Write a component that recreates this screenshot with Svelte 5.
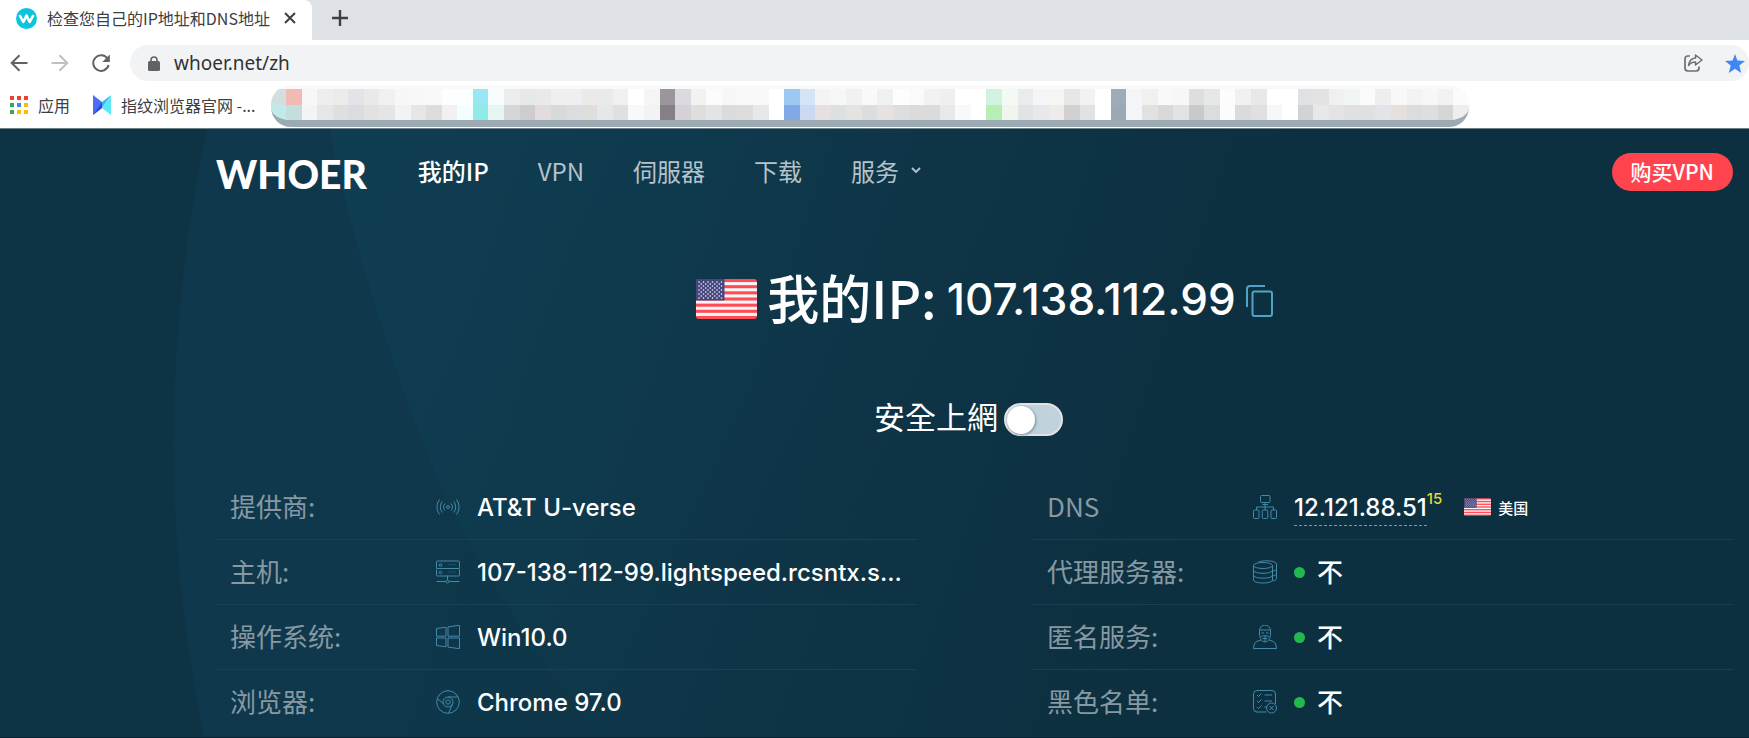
<script>
    const blurred = [
        ["#cfe0df", "#bfeae8"], ["#f3b9b4", "#c2dfdd"], ["#f7f7f7", "#f4f4f4"], ["#eeeeee", "#e6e6e6"],
        ["#ecebea", "#dfdfdf"], ["#e2e4e7", "#dcdce0"], ["#e9e9e9", "#e3e2de"], ["#f0f0f0", "#e3e5e9"],
        ["#f7f7f7", "#f3f3f3"], ["#f7f8f7", "#e6e6e6"], ["#f9f9f8", "#dfdddb"], ["#fdfefe", "#f1f1f4"],
        ["#fbffff", "#f3feff"], ["#97e8f3", "#90ebe8"], ["#f7fdfd", "#e6f6f5"], ["#ededed", "#d6d6d6"],
        ["#e6e8e9", "#cdcdd0"], ["#e9e9e9", "#e2dcdc"], ["#efefef", "#d8dad9"], ["#efefef", "#dbdde0"],
        ["#ece9e9", "#e0deda"], ["#e9ebea", "#e5e7e9"], ["#f0f0f0", "#dfe1e0"], ["#ffffff", "#f9f9f9"],
        ["#f5f5f5", "#f3f3f3"], ["#9b969c", "#867f87"], ["#dddadf", "#d5d2d7"], ["#f2f2f2", "#dfdedb"],
        ["#fcfcfc", "#e4e4e7"], ["#f7f7f7", "#dbdbdc"], ["#f9f9f9", "#dfdcdc"], ["#f9f9f9", "#e6e8e9"],
        ["#ffffff", "#ffffff"], ["#9ec8f2", "#80a9e5"], ["#d5e3f7", "#cad8f2"], ["#f4f4f4", "#e5e1e1"],
        ["#f5f8f7", "#dde0e2"], ["#f1f1f1", "#e4e3e0"], ["#f9f9f9", "#dbdde1"], ["#f0f0f0", "#e5e2e0"],
        ["#fbfefd", "#dedede"], ["#f9faf9", "#dddbd9"], ["#f2f2f2", "#dbdbdd"], ["#efefef", "#e9e9e9"],
        ["#ffffff", "#f9f9f9"], ["#ffffff", "#ffffff"], ["#d2f2e0", "#b6efb3"], ["#f3f9f5", "#f0f6ee"],
        ["#eaecec", "#e1e3e5"], ["#f4f5f9", "#e8e8ea"], ["#f5f5f3", "#f0eae9"], ["#e6e6e6", "#d1d1d1"],
        ["#f2f2f2", "#e0e2e5"], ["#ffffff", "#ffffff"], ["#9dacb8", "#9ba8b5"], ["#f3f5f9", "#f3f5f8"],
        ["#f0f0f0", "#e1e1df"], ["#f9f9f9", "#dbd8da"], ["#f7f7f7", "#e0e4e5"], ["#dedede", "#c9c9cb"],
        ["#e5e8e6", "#dadddb"], ["#fcfcfc", "#fcfcfc"], ["#f1f1f1", "#d9dcda"], ["#e8e8ea", "#e2dfe1"],
        ["#ffffff", "#f7f7f7"], ["#ffffff", "#ffffff"], ["#dfe1e4", "#d1d3d4"], ["#e3e3e3", "#e8e8e8"],
        ["#f0f0f0", "#e5e3e4"], ["#f1f5f3", "#e0e0e0"], ["#fbfbfb", "#e0e0e0"], ["#eeeeee", "#e2e4e7"],
        ["#f8f8f8", "#e3e0dd"], ["#f3f3f3", "#dcdcde"], ["#f7f7f7", "#dedee0"], ["#f2f2f2", "#d6d6d6"],
        ["#fbfbfb", "#eeeeee"],
    ];

    const appDots = ["#ea4335", "#ea4335", "#ea4335", "#34a853", "#4285f4", "#fbbc04", "#34a853", "#fbbc04", "#fbbc04"];

    const menu = [
        { text: "我的IP", active: true },
        { text: "VPN" },
        { text: "伺服器" },
        { text: "下载" },
        { text: "服务", more: true },
    ];

    const left = [
        { label: "提供商:", icon: "signal", value: "AT&T U-verse" },
        { label: "主机:", icon: "server", value: "107-138-112-99.lightspeed.rcsntx.s..." },
        { label: "操作系统:", icon: "windows", value: "Win10.0" },
        { label: "浏览器:", icon: "chrome", value: "Chrome 97.0" },
    ];

    const right = [
        { label: "DNS", icon: "network", value: "12.121.88.51", count: 15, country: "美国" },
        { label: "代理服务器:", icon: "database", value: "不", dot: true },
        { label: "匿名服务:", icon: "person", value: "不", dot: true },
        { label: "黑色名单:", icon: "list", value: "不", dot: true },
    ];

    let address = $state("whoer.net/zh");
    let safe = $state(false);
</script>

{#snippet flag()}
    <svg class="flag" viewBox="0 0 61 40" aria-hidden="true">
        <rect width="61" height="40" rx="3" fill="#ff4b55" />
        {#each [1, 3, 5, 7, 9, 11] as n}
            <rect y={n * 3.077} width="61" height="3.077" fill="#f5f5f5" />
        {/each}
        <path d="M3 0H28.500V21.500H0V3Q0 0 3 0Z" fill="#46467f" />
        {#each [3, 7, 11, 15, 19] as y}
            {#each [3, 7.500, 12, 16.500, 21, 25.500] as x}
                <circle cx={x} cy={y} r="0.800" fill="#f5f5f5" />
            {/each}
        {/each}
        {#each [5, 9, 13, 17] as y}
            {#each [5.250, 9.750, 14.250, 18.750, 23.250] as x}
                <circle cx={x} cy={y} r="0.800" fill="#f5f5f5" />
            {/each}
        {/each}
    </svg>
{/snippet}

{#snippet icon(name)}
    <svg class="icon" viewBox="0 0 24 24" aria-hidden="true">
        {#if name === "signal"}
            <circle cx="12" cy="12" r="1.500" />
            <path d="M9 8.500a5 5 0 0 0 0 7M15 8.500a5 5 0 0 1 0 7M6.300 6.500a8.500 8.500 0 0 0 0 11M17.700 6.500a8.500 8.500 0 0 1 0 11M3.500 4.500a12 12 0 0 0 0 15M20.500 4.500a12 12 0 0 1 0 15" />
        {:else if name === "server"}
            <rect x="0.500" y="1" width="23" height="7.500" rx="1" />
            <rect x="0.500" y="8.500" width="23" height="7.500" rx="1" />
            <circle cx="4.500" cy="5" r="1.300" />
            <circle cx="4.500" cy="12.500" r="1.300" />
            <path d="M13 4.500h7M13 12h7" stroke-dasharray="1.500 1" opacity="0.500" />
            <path d="M11.500 16v4M0.500 21.500h9.500M13 21.500h10.500" />
            <circle cx="11.500" cy="21.500" r="1.500" />
        {:else if name === "windows"}
            <path d="M.5 3.500 10 2.200V11.200H.5ZM12 1.900 23.500.3V11.200H12ZM.5 13H10V21.800L.5 20.500ZM12 13H23.500V23.700L12 22.100Z" />
        {:else if name === "chrome"}
            <circle cx="12" cy="12" r="11.300" />
            <circle cx="12" cy="12" r="5" />
            <circle cx="12" cy="12" r="2.200" />
            <path d="M12 7H22.200M16.700 13.500 12.500 23.300M1.500 8.500l6 5.500" />
        {:else if name === "network"}
            <rect x="7.500" y="0.500" width="9.500" height="7" rx="1" />
            <path d="M9.500 9.500h5.500M12 7.500V15M3.500 15V12h17v3" />
            <rect x="0.500" y="15" width="5.500" height="8.500" rx="1" />
            <rect x="9.300" y="15" width="5.500" height="8.500" rx="1" />
            <rect x="18" y="15" width="5.500" height="8.500" rx="1" />
        {:else if name === "database"}
            <ellipse cx="10" cy="5.500" rx="9.500" ry="3" />
            <path d="M.5 5.500v14.500c0 4 19 4 19 0V5.500M.5 10.300c0 4 19 4 19 0M.5 15.200c0 4 19 4 19 0" />
            <path d="M5 2.500c2-2.500 18.500-2.500 18.500 1.500v14.500c0 1.200-1.500 2-4 2.500M23.500 8.700c0 1.200-1.500 2-4 2.500M23.500 13.500c0 1.200-1.500 2-4 2.500" />
        {:else if name === "person"}
            <path d="M6.500 9V5.500a5.500 5.500 0 0 1 11 0V9c0 5-3 8-5.500 8s-5.500-3-5.500-8Z" />
            <path d="M6.500 5h11M8.500 8h2.500M13 8h2.500M8 11.500c2-1 6-1 8 0M9.500 13.500h5M12 11v6" />
            <path d="M8 15 3.500 16.500Q.5 18 .5 23.500H23.500Q23.500 18 20.500 16.500L16 15" />
        {:else}
            <path d="M13.500 22H4a3.500 3.500 0 0 1-3.500-3.500V4A3.500 3.500 0 0 1 4 .500h15A3.500 3.500 0 0 1 22.500 4v10" />
            <path d="m4 5 1.500 1.500 3-3M4 11l1.500 1.500 3-3M4 17l1.500 1.500 3-3M11.500 5h7.500M11.500 11h7.500M11.500 17h2" />
            <circle cx="18.500" cy="18" r="5" />
            <path d="m16.500 16 4 4m0-4-4 4" />
        {/if}
    </svg>
{/snippet}

{#snippet column(rows)}
    <dl>
        {#each rows as row}
            <div class="row">
                <dt>{row.label}</dt>
                <dd>
                    {@render icon(row.icon)}
                    {#if row.dot}<span class="dot"></span>{/if}
                    {#if row.count}
                        <a class="dns" href="#dns">{row.value}</a><sup>{row.count}</sup>
                        <span class="country">{@render flag()} {row.country}</span>
                    {:else}
                        <span class:status={row.dot}>{row.value}</span>
                    {/if}
                </dd>
            </div>
        {/each}
    </dl>
{/snippet}

<div class="browser">
    <div class="tabs">
        <div class="tab">
            <svg width="21" height="21" viewBox="0 0 21 21" aria-hidden="true">
                <circle cx="10.500" cy="10.500" r="10.500" fill="#0cc5dc" />
                <path d="M3.500 7 7.300 14 10.500 7.500 13.700 14 17.500 7" fill="none" stroke="#fff" stroke-width="2.600" stroke-linejoin="round" />
            </svg>
            <span>检查您自己的IP地址和DNS地址</span>
            <button aria-label="关闭">
                <svg width="12" height="12" viewBox="0 0 12 12"><path d="m1 1 10 10M11 1 1 11" stroke="#3c4043" stroke-width="2" /></svg>
            </button>
        </div>
        <button class="new-tab" aria-label="新标签页">
            <svg width="16" height="16" viewBox="0 0 16 16"><path d="M8 0v16M0 8h16" stroke="#3c4043" stroke-width="2.400" /></svg>
        </button>
    </div>

    <div class="toolbar">
        <button aria-label="后退">
            <svg width="18" height="18" viewBox="0 0 18 18"><path d="M17.500 9H2M9.500 1.200 1.700 9l7.800 7.800" fill="none" stroke="#5f6368" stroke-width="2" /></svg>
        </button>
        <button aria-label="前进">
            <svg width="18" height="18" viewBox="0 0 18 18"><path d="M.5 9H16M8.500 1.200 16.300 9l-7.800 7.800" fill="none" stroke="#bdc0c4" stroke-width="2" /></svg>
        </button>
        <button aria-label="重新加载">
            <svg width="18" height="18" viewBox="0 0 18 18"><path d="M15.500 4.700A7.800 7.800 0 1 0 16.600 11" fill="none" stroke="#5f6368" stroke-width="2" /><path d="M17.800.5V8H10.300Z" fill="#5f6368" /></svg>
        </button>
        <div class="address">
            <svg width="12" height="15" viewBox="0 0 12 15" aria-hidden="true"><rect y="5" width="12" height="10" rx="1.500" fill="#5f6368" /><path d="M3 6V4a3 3 0 0 1 6 0v2" fill="none" stroke="#5f6368" stroke-width="1.600" /></svg>
            <input aria-label="地址" bind:value={address} />
            <button aria-label="分享">
                <svg width="19" height="18" viewBox="0 0 19 18"><path d="M6 2H4Q1 2 1 5v9q0 3 3 3h8q3 0 3-3v-1.500" fill="none" stroke="#6b6f73" stroke-width="1.700" /><path d="M11.500 1 18 6l-6.500 5V8Q7 8 4.500 11.500 5.500 4.500 11.500 4Z" fill="none" stroke="#6b6f73" stroke-width="1.500" stroke-linejoin="round" /></svg>
            </button>
            <button aria-label="收藏">
                <svg width="20" height="19" viewBox="0 0 20 19"><path d="m10 0 2.400 6.600L20 7l-5.700 4.600L16.200 19 10 14.800 3.800 19l1.900-7.400L0 7l7.600-.400Z" fill="#4285f4" /></svg>
            </button>
        </div>
    </div>

    <div class="bookmarks">
        <a href="#apps">
            <span class="apps">
                {#each appDots as color}<i style="background: {color}"></i>{/each}
            </span>
            应用
        </a>
        <a href="#browser">
            <svg width="18" height="20" viewBox="0 0 18 20" aria-hidden="true">
                <path d="M0 0 9 7v6L0 20Z" fill="#4c6ef5" />
                <path d="M0 20 9 7v6Z" fill="#2f48e8" />
                <path d="M18 0 9 7v6Z" fill="#38b6f5" />
                <path d="M18 0v20L9 13Z" fill="#5be7f5" />
            </svg>
            指纹浏览器官网 -...
        </a>
        <div class="blurred">
            {#each blurred as [top, bottom]}
                <span><i style="background: {top}"></i><i style="background: {bottom}"></i></span>
            {/each}
        </div>
    </div>
</div>

<main>
    <svg class="backdrop" viewBox="0 0 1749 609" preserveAspectRatio="none" aria-hidden="true">
        <defs>
            <linearGradient id="outer" gradientUnits="userSpaceOnUse" x1="500" y1="0" x2="1250" y2="250">
                <stop offset="0" stop-color="#0f384c" />
                <stop offset="1" stop-color="#0d3040" />
            </linearGradient>
            <linearGradient id="inner" gradientUnits="userSpaceOnUse" x1="400" y1="0" x2="950" y2="260">
                <stop offset="0" stop-color="#11465b" stop-opacity="0.350" />
                <stop offset="1" stop-color="#11465b" stop-opacity="0" />
            </linearGradient>
        </defs>
        <path d="M207 0Q142 310 204 609H1749V0Z" fill="url(#outer)" />
        <path d="M330 0C350 110 400 260 437 348S560 560 600 609H1749V0Z" fill="url(#inner)" />
    </svg>

    <header>
        <a class="logo" href="#home">WHOER</a>
        <nav>
            {#each menu as item}
                <a href="#menu" class:active={item.active}>
                    {item.text}
                    {#if item.more}
                        <svg width="10" height="6" viewBox="0 0 10 6" aria-hidden="true"><path d="m1 1 4 4 4-4" fill="none" stroke="currentColor" stroke-width="1.800" /></svg>
                    {/if}
                </a>
            {/each}
        </nav>
        <button class="buy">购买VPN</button>
    </header>

    <h1>
        {@render flag()}
        <span>我的IP:</span>
        <strong>107.138.112.99</strong>
        <button aria-label="复制">
            <svg width="27" height="32" viewBox="0 0 27 32"><path d="M1 22V4Q1 1 4 1H19" fill="none" stroke="#4fa3c7" stroke-width="2" /><rect x="6.500" y="6.500" width="19.500" height="24.500" rx="2" fill="none" stroke="#4fa3c7" stroke-width="2" /></svg>
        </button>
    </h1>

    <label class="safe">
        <span>安全上網</span>
        <input type="checkbox" role="switch" bind:checked={safe} />
    </label>

    <section>
        {@render column(left)}
        {@render column(right)}
    </section>
</main>

<style>
    :global(body) {
        margin: 0;
        background: #0a2234;
    }

    button {
        display: flex;
        padding: 0;
        border: 0;
        background: none;
        cursor: pointer;
    }

    a {
        color: inherit;
        text-decoration: none;
    }

    /* BROWSER */

    .browser {
        font: 16px "Noto Sans CJK SC", sans-serif;
        color: #3c4043;
        background: white;
        border-bottom: 1px solid #6d7f88;
    }

    .tabs {
        display: flex;
        align-items: center;
        height: 40px;
        background: #dee1e6;
    }

    .tab {
        display: flex;
        align-items: center;
        box-sizing: border-box;
        width: 312px;
        height: 40px;
        padding: 0 16px 4px;
        gap: 10px;
        white-space: nowrap;
        background: white;
        border-radius: 0 8px 0 0;

        span {
            flex: 1;
        }
    }

    .new-tab {
        margin: 0 20px 4px;
    }

    .toolbar {
        display: flex;
        align-items: center;
        gap: 23px;
        padding: 5px 0 4px 10px;
    }

    .address {
        display: flex;
        align-items: center;
        flex: 1;
        height: 36px;
        margin-left: -3px;
        padding: 0 4px 0 18px;
        gap: 14px;
        background: #f1f3f4;
        border-radius: 18px;

        input {
            flex: 1;
            padding: 0;
            border: 0;
            outline: 0;
            background: none;
            font: 19px "Noto Sans", sans-serif;
            color: #303336;
        }

        button + button {
            margin-left: 8px;
        }
    }

    .bookmarks {
        display: flex;
        align-items: center;
        height: 43px;
        padding-left: 10px;
        gap: 23px;
        white-space: nowrap;

        a {
            display: flex;
            align-items: center;
            padding-bottom: 3px;
            gap: 10px;
        }
    }

    .apps {
        display: grid;
        grid-template-columns: repeat(3, 4px);
        gap: 3px;

        i {
            height: 4px;
        }
    }

    .blurred {
        display: flex;
        align-self: flex-start;
        flex: 1;
        box-sizing: border-box;
        height: 42px;
        margin: 0 280px 0 -8px;
        padding-top: 4px;
        border-bottom: 7px solid #9cabb3;
        border-radius: 20px;
        overflow: hidden;
        background: #f9f9f9;

        span {
            flex: 1;
            display: grid;
        }
    }

    /* PAGE */

    main {
        position: relative;
        padding: 0 16px 3px 216px;
        font-family: Inter, "Noto Sans CJK SC", sans-serif;
        color: white;
        background: #0d3344;
    }

    .backdrop {
        position: absolute;
        inset: 0;
        width: 100%;
        height: 100%;
    }

    header,
    h1,
    .safe,
    section {
        position: relative;
    }

    header {
        display: flex;
        align-items: center;
        height: 86px;
    }

    .logo {
        padding-top: 3px;
        font: 900 39px Lato, sans-serif;
    }

    nav {
        display: flex;
        flex: 1;
        gap: 49px;
        margin-left: 51px;
        padding-bottom: 4px;
        font: 24px "Noto Sans CJK SC", sans-serif;
        color: #b5c3ca;

        a {
            display: flex;
            align-items: center;
            gap: 12px;
        }

        .active {
            font-weight: 500;
            color: white;
        }
    }

    .buy {
        align-items: center;
        height: 38px;
        padding: 0 19px 2px;
        border-radius: 19px;
        font: 500 21px "Noto Sans CJK SC", sans-serif;
        color: white;
        background: #ff444d;
    }

    h1 {
        display: flex;
        align-items: center;
        justify-content: center;
        height: 80px;
        margin: 44px 0 0 20px;
        gap: 10px;
        font: 500 52px "Noto Sans CJK SC", sans-serif;

        .flag {
            width: 61px;
            height: 40px;
        }

        span {
            padding-bottom: 6px;
        }

        strong {
            font: 500 44px Inter, sans-serif;
        }

        button {
            padding-top: 4px;
        }
    }

    .safe {
        display: flex;
        align-items: center;
        justify-content: center;
        height: 48px;
        margin: 56px 12px 0 0;
        gap: 6px;
        font: 31px "Noto Sans CJK TC", sans-serif;

        span {
            padding-bottom: 8px;
        }

        input {
            appearance: none;
            width: 59px;
            height: 33px;
            margin: 0;
            padding: 1px;
            box-sizing: border-box;
            border: 2px solid #e3e3e3;
            border-radius: 17px;
            background: #c0d3dc;
            cursor: pointer;

            &::before {
                content: "";
                display: block;
                width: 28px;
                height: 28px;
                border-radius: 50%;
                background: white;
                box-shadow: 1px 1px 3px #7b8f99;
            }

            &:checked::before {
                margin-left: auto;
            }
        }
    }

    section {
        display: grid;
        grid-template-columns: 1fr 1fr;
        gap: 117px;
        margin-top: 32px;
    }

    dl {
        margin: 0;
        min-width: 0;
    }

    .row {
        display: grid;
        grid-template-columns: 206px 1fr;
        align-items: center;
        height: 64px;
        padding: 0 6px 0 14px;
        border-bottom: 1px solid #1a4152;

        &:last-child {
            border: 0;
        }
    }

    dt {
        padding-bottom: 4px;
        font: 26px "Noto Sans CJK SC", sans-serif;
        color: #8799a2;
    }

    dd {
        display: flex;
        align-items: center;
        min-width: 0;
        margin: 0;
        font-size: 24px;
        font-weight: 500;
        white-space: nowrap;
    }

    .icon {
        flex: none;
        width: 24px;
        height: 24px;
        margin-right: 17px;
        fill: none;
        stroke: #4389a8;
        stroke-width: 1;
    }

    .status {
        padding-bottom: 4px;
        font-size: 26px;
    }

    .dot {
        width: 11px;
        height: 11px;
        margin-right: 12px;
        border-radius: 50%;
        background: #22b84f;
    }

    .dns {
        padding: 4px 0 3px;
        border-bottom: 1px dashed #5da5c0;
    }

    sup {
        align-self: flex-start;
        font-size: 15px;
        color: #e3d73c;
    }

    .country {
        display: flex;
        align-items: center;
        margin-left: 22px;
        gap: 7px;
        font-size: 15px;

        .flag {
            width: 27px;
            height: 18px;
        }
    }
</style>
